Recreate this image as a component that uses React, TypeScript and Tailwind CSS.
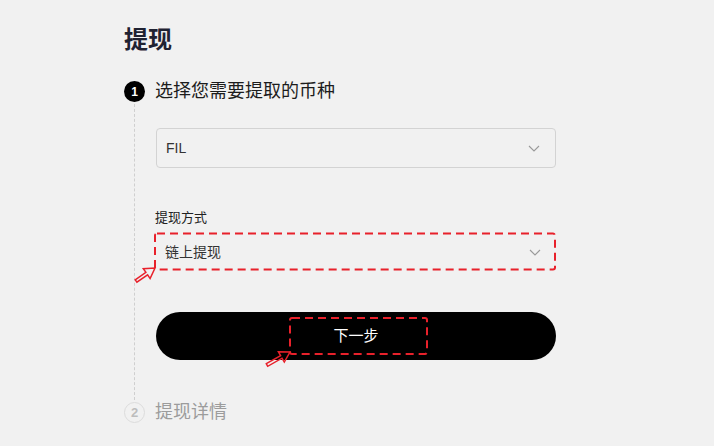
import React from "react";

const font = {
  fontFamily: '"Liberation Sans", "Noto Sans CJK SC", sans-serif',
};

function Chevron() {
  return (
    <svg width="12" height="7" viewBox="0 0 12 7" fill="none">
      <path d="M1 1l5 5 5-5" stroke="#9a9a9a" strokeWidth="1.1" />
    </svg>
  );
}

function Select({ value, bordered = true }: { value: string; bordered?: boolean }) {
  return (
    <div
      className={`flex h-[40px] w-full items-center justify-between rounded-[4px] pl-[9px] pr-[15px] ${
        bordered ? "border border-[#d3d3d3]" : ""
      }`}
    >
      <span className="text-[14px] text-[#333]">{value}</span>
      <Chevron />
    </div>
  );
}

// red annotation marks drawn over the page
function Annotations() {
  return (
    <svg
      className="pointer-events-none absolute left-0 top-0"
      width="714"
      height="446"
      viewBox="0 0 714 446"
      fill="none"
    >
      <rect
        x="155"
        y="233.5"
        width="400"
        height="36"
        rx="2"
        stroke="#e8212b"
        strokeWidth="2"
        strokeDasharray="8 5"
      />
      <rect
        x="290"
        y="318"
        width="137"
        height="36"
        rx="2"
        stroke="#e8212b"
        strokeWidth="2"
        strokeDasharray="8 5"
      />
      <polygon
        points="135.2,279.8 145.9,272.4 143.3,268.7 155,268 150.1,278.6 147.6,274.9 136.9,282.2"
        stroke="#e8212b"
        strokeWidth="1.5"
        strokeLinejoin="miter"
      />
      <polygon
        points="266.3,363.7 280.6,355.6 278.4,351.7 290,352 284.3,362.1 282,358.2 267.7,366.3"
        stroke="#e8212b"
        strokeWidth="1.5"
        strokeLinejoin="miter"
      />
    </svg>
  );
}

export default function App() {
  return (
    <div
      className="relative h-[446px] w-[714px] overflow-hidden bg-[#f1f1f1] pl-[124px] pt-[24px]"
      style={font}
    >
      <h1 className="text-[24px] font-bold leading-[32px] text-[#1f2232]">
        提现
      </h1>

      {/* ── Step 1 ─────────────────────────────── */}
      <div className="mt-[25px] flex w-[432px] gap-[10px]">
        <div className="flex w-[21px] shrink-0 flex-col items-center">
          <div className="flex h-[21px] w-[21px] items-center justify-center rounded-full bg-black text-[12px] font-bold text-white">
            1
          </div>
          <div className="mb-[2px] mt-[2px] w-0 flex-1 border-l border-dashed border-[#cfcfcf]" />
        </div>
        <div className="min-w-0 flex-1 pb-[42px]">
          <div className="text-[18px] leading-[21px] text-[#1c1c1c]">
            选择您需要提取的币种
          </div>
          <div className="mt-[26px] w-[401px] pl-[1px]">
            <Select value="FIL" />
          </div>
          <div className="mt-[41px] text-[13px] leading-[18px] text-[#222]">
            提现方式
          </div>
          <div className="mt-[5px] w-[401px] pl-[1px]">
            <Select value="链上提现" bordered={false} />
          </div>
          <div className="mt-[40px] w-[401px] pl-[1px]">
            <button
              type="button"
              className="flex h-[48px] w-full items-center justify-center rounded-full bg-black text-[15px] text-white"
            >
              下一步
            </button>
          </div>
        </div>
      </div>

      {/* ── Step 2 ─────────────────────────────── */}
      <div className="flex w-[432px] gap-[10px]">
        <div className="flex w-[21px] shrink-0 flex-col items-center">
          <div className="flex h-[21px] w-[21px] items-center justify-center rounded-full border border-[#dcdcdc] text-[13px] font-bold text-[#bdbdbd]">
            2
          </div>
        </div>
        <div className="text-[18px] leading-[21px] text-[#9c9c9c]">
          提现详情
        </div>
      </div>

      <Annotations />
    </div>
  );
}
